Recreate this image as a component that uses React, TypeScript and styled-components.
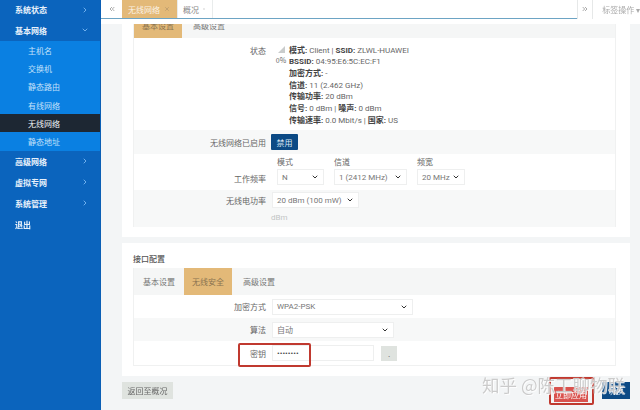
import styled, { createGlobalStyle } from "styled-components";
import { ChevronDown, ChevronRight, ChevronsLeft, ChevronsRight, X } from "lucide-react";

const menuBefore = ["系统状态"];
const subMenu = ["主机名", "交换机", "静态路由", "有线网络", "无线网络", "静态地址"];
const menuAfter = ["高级网络", "虚拟专网", "系统管理"];

const App = () => {
  return (
    <Page>
      <GlobalStyle />
      <Sidebar>
        {menuBefore.map((name) => (
          <MenuItem key={name}>
            {name}
            <ChevronRight size={8} strokeWidth={3} />
          </MenuItem>
        ))}
        <MenuItem>
          基本网络
          <ChevronDown size={8} strokeWidth={3} />
        </MenuItem>
        <SubList>
          {subMenu.map((name) => (
            <SubItem key={name} $active={name === "无线网络"}>
              {name}
            </SubItem>
          ))}
        </SubList>
        {menuAfter.map((name) => (
          <MenuItem key={name}>
            {name}
            <ChevronRight size={8} strokeWidth={3} />
          </MenuItem>
        ))}
        <MenuItem>退出</MenuItem>
      </Sidebar>

      <Main>
        <TabBar>
          <TabScroll>
            <ChevronsLeft size={8} strokeWidth={2.5} />
          </TabScroll>
          <Tab $active>
            无线网络
            <X size={6} strokeWidth={3} />
          </Tab>
          <Tab>
            概况
            <X size={6} strokeWidth={3} />
          </Tab>
          <TabTools>
            <TabForward>
              <ChevronsRight size={8} strokeWidth={2.5} />
            </TabForward>
            <TabAction>标签操作 ▾</TabAction>
          </TabTools>
        </TabBar>

        <Content>
          <Card>
            <ClippedTop>
              <Panel>
                <TabStrip $tall>
                  <PanelTab $active>基本设置</PanelTab>
                  <PanelTab>高级设置</PanelTab>
                </TabStrip>
                <StatusRow>
                  <Label>状态</Label>
                  <SignalBox>
                    <svg width="7" height="7" viewBox="0 0 7 7">
                      <path d="M0 7 L7 0 L7 7 Z" fill="#c9cccc" />
                    </svg>
                    <span>0%</span>
                  </SignalBox>
                  <StatusText>
                    <div>
                      <b>模式:</b> Client | <b>SSID:</b> ZLWL-HUAWEI
                    </div>
                    <div>
                      <b>BSSID:</b> 04:95:E6:5C:EC:F1
                    </div>
                    <div>
                      <b>加密方式:</b> -
                    </div>
                    <div>
                      <b>信道:</b> 11 (2.462 GHz)
                    </div>
                    <div>
                      <b>传输功率:</b> 20 dBm
                    </div>
                    <div>
                      <b>信号:</b> 0 dBm | <b>噪声:</b> 0 dBm
                    </div>
                    <div>
                      <b>传输速率:</b> 0.0 Mbit/s | <b>国家:</b> US
                    </div>
                  </StatusText>
                </StatusRow>
                <Row $grey $height={24}>
                  <Label>无线网络已启用</Label>
                  <DarkButton>禁用</DarkButton>
                </Row>
                <Row $height={36}>
                  <Label $low>工作频率</Label>
                  <FreqGroup>
                    <FreqField>
                      <FieldTitle>模式</FieldTitle>
                      <Select $width={47}>
                        N
                        <ChevronDown size={8} strokeWidth={3} />
                      </Select>
                    </FreqField>
                    <FreqField>
                      <FieldTitle>信道</FieldTitle>
                      <Select $width={73}>
                        1 (2412 MHz)
                        <ChevronDown size={8} strokeWidth={3} />
                      </Select>
                    </FreqField>
                    <FreqField>
                      <FieldTitle>频宽</FieldTitle>
                      <Select $width={48}>
                        20 MHz
                        <ChevronDown size={8} strokeWidth={3} />
                      </Select>
                    </FreqField>
                  </FreqGroup>
                </Row>
                <PowerRow>
                  <Label $top>无线电功率</Label>
                  <div>
                    <Select $width={87}>
                      20 dBm (100 mW)
                      <ChevronDown size={8} strokeWidth={3} />
                    </Select>
                    <Hint>dBm</Hint>
                  </div>
                </PowerRow>
              </Panel>
            </ClippedTop>
          </Card>

          <SecondCard>
            <SectionTitle>接口配置</SectionTitle>
            <Panel>
              <TabStrip>
                <PanelTab>基本设置</PanelTab>
                <PanelTab $active>无线安全</PanelTab>
                <PanelTab>高级设置</PanelTab>
              </TabStrip>
              <Row $height={23}>
                <Label>加密方式</Label>
                <Select $width={141}>
                  WPA2-PSK
                  <ChevronDown size={8} strokeWidth={3} />
                </Select>
              </Row>
              <Row $grey $height={23}>
                <Label>算法</Label>
                <Select $width={122}>
                  自动
                  <ChevronDown size={8} strokeWidth={3} />
                </Select>
              </Row>
              <KeyRow>
                <Label>密钥</Label>
                <KeyInput>••••••••</KeyInput>
                <RevealButton>.</RevealButton>
                <RedMark />
              </KeyRow>
            </Panel>
          </SecondCard>

          <Footer>
            <BackButton>返回至概况</BackButton>
            <FooterActions>
              <ApplyWrap>
                <ApplyButton>立即应用</ApplyButton>
                <RedOutline />
              </ApplyWrap>
              <SaveButton>切换</SaveButton>
            </FooterActions>
            <Watermark>知乎 @陈工聊物联</Watermark>
          </Footer>
        </Content>
      </Main>
    </Page>
  );
};

export default App;

const GlobalStyle = createGlobalStyle`
  html, body {
    margin: 0;
    padding: 0;
    background: #f3f5f6;
  }
  * {
    box-sizing: border-box;
  }
`;

const Page = styled.div`
  width: 640px;
  height: 410px;
  display: flex;
  overflow: hidden;
  font-family: "Noto Sans CJK SC", Roboto, "Liberation Sans", sans-serif;
  font-size: 8px;
  color: #666;
  filter: blur(0.35px);
`;

const Sidebar = styled.nav`
  width: 101px;
  flex: none;
  background: #0b64bd;
  border-right: 1px solid #0b5fb5;
`;

const MenuItem = styled.div`
  height: 21px;
  padding: 0 11px 0 15px;
  display: flex;
  align-items: center;
  justify-content: space-between;
  font-weight: 700;
  color: #e8f1fb;
  &:first-child {
    height: 19.5px;
  }
  svg {
    color: #6fb0ee;
  }
`;

const SubList = styled.div`
  height: 110px;
  padding-top: 0.5px;
  background: #0a80e2;
`;

const SubItem = styled.div<{ $active?: boolean }>`
  height: 18.3px;
  padding-left: 28px;
  display: flex;
  align-items: center;
  color: ${(p) => (p.$active ? "#f2f5f8" : "#c4e1fa")};
  background: ${(p) => (p.$active ? "#1d2733" : "transparent")};
`;

const Main = styled.main`
  flex: 1;
  min-width: 0;
  display: flex;
  flex-direction: column;
`;

const TabBar = styled.header`
  height: 19px;
  flex: none;
  display: flex;
  align-items: stretch;
  background: #fff;
  border-bottom: 1px solid #6da4c4;
`;

const TabScroll = styled.div`
  width: 21px;
  display: flex;
  align-items: center;
  justify-content: center;
  color: #999;
`;

const Tab = styled.div<{ $active?: boolean }>`
  padding: 0 7px 0 ${(p) => (p.$active ? "6px" : "5px")};
  width: ${(p) => (p.$active ? "56px" : "35px")};
  display: flex;
  align-items: center;
  gap: 4px;
  color: ${(p) => (p.$active ? "#fbf3e6" : "#888")};
  background: ${(p) => (p.$active ? "#e3b978" : "#fff")};
  border-right: 1px solid #e9ecec;
  white-space: nowrap;
  svg {
    color: ${(p) => (p.$active ? "#b89a6c" : "#888")};
  }
`;

const TabTools = styled.div`
  margin-left: auto;
  width: 63px;
  height: 21px;
  display: flex;
  background: #fff;
  border-left: 1px solid #e6e8e8;
  border-bottom: 1px solid #e8eaea;
`;

const TabForward = styled.div`
  width: 20px;
  display: flex;
  align-items: center;
  justify-content: center;
  padding-bottom: 2px;
  color: #999;
  border-right: 1px solid #e6e8e8;
`;

const TabAction = styled.div`
  padding: 0 0 2px 9px;
  display: flex;
  align-items: center;
  white-space: nowrap;
  color: #aaa;
`;

const Content = styled.div`
  flex: 1;
  min-height: 0;
  padding: 5px 10px 0 21px;
  background: linear-gradient(#fff 0, #fff 5px, #f3f5f6 5px);
  display: flex;
  flex-direction: column;
`;

const Card = styled.section`
  flex: none;
  height: 213px;
  padding: 0 14px 10px 11px;
  background: #fff;
  overflow: hidden;
`;

const ClippedTop = styled.div`
  height: 203px;
  overflow: hidden;
`;

const SecondCard = styled.section`
  flex: none;
  height: 133px;
  margin-top: 6px;
  padding: 9px 14px 0 11px;
  background: #fff;
`;

const SectionTitle = styled.div`
  height: 16px;
  font-weight: 500;
  color: #555;
  line-height: 14px;
`;

const Panel = styled.div`
  border: 1px solid #f0f1f1;
  border-top: 0;
`;

const TabStrip = styled.div<{ $tall?: boolean }>`
  height: 27px;
  display: flex;
  background: #f5f6f6;
  ${(p) => p.$tall && "height: 26px; margin-top: -12px;"}
`;

const PanelTab = styled.div<{ $active?: boolean }>`
  width: ${(p) => (p.$active ? "48px" : "50px")};
  display: flex;
  align-items: center;
  justify-content: center;
  color: ${(p) => (p.$active ? "#8a7350" : "#777")};
  background: ${(p) => (p.$active ? "#e3b978" : "transparent")};
  &:last-child {
    width: 54px;
  }
`;

const Row = styled.div<{ $grey?: boolean; $height: number }>`
  height: ${(p) => p.$height}px;
  display: flex;
  align-items: center;
  gap: 6px;
  background: ${(p) => (p.$grey ? "#f7f8f8" : "#fff")};
`;

const StatusRow = styled.div`
  height: 92px;
  display: flex;
  padding-top: 6.5px;
  background: #fff;
`;

const PowerRow = styled.div`
  height: 37px;
  padding-top: 2px;
  display: flex;
  gap: 6px;
  background: #f7f8f8;
`;

const KeyRow = styled.div`
  position: relative;
  height: 24px;
  display: flex;
  align-items: center;
  gap: 6px;
  background: #fff;
`;

const Label = styled.div<{ $low?: boolean; $top?: boolean }>`
  width: 132px;
  flex: none;
  text-align: right;
  color: #666;
  ${(p) => p.$low && "align-self: flex-end; padding-bottom: 6px;"}
  ${(p) => p.$top && "padding-top: 3px;"}
`;

const SignalBox = styled.div`
  width: 12px;
  margin: 0 2px 0 9px;
  flex: none;
  display: flex;
  flex-direction: column;
  align-items: center;
  gap: 3px;
  font-size: 7px;
  line-height: 9px;
  svg {
    margin-top: 1px;
  }
`;

const StatusText = styled.div`
  font-family: Roboto, "Noto Sans CJK SC", sans-serif;
  line-height: 11.7px;
  white-space: nowrap;
  color: #666;
  b {
    color: #444;
    font-weight: 700;
  }
`;

const DarkButton = styled.div`
  width: 27px;
  height: 16px;
  margin-left: -1px;
  display: flex;
  align-items: center;
  justify-content: center;
  background: #0c4a85;
  color: #dbe8f4;
  border-radius: 1px;
`;

const FreqGroup = styled.div`
  display: flex;
  gap: 10px;
  padding-left: 5px;
  align-self: flex-end;
  padding-bottom: 5px;
`;

const FreqField = styled.div`
  display: flex;
  flex-direction: column;
  gap: 1px;
`;

const FieldTitle = styled.div`
  height: 13px;
  line-height: 13px;
  color: #666;
`;

const Select = styled.div<{ $width: number }>`
  width: ${(p) => p.$width}px;
  height: 16px;
  padding: 0 4px 0 4px;
  display: flex;
  align-items: center;
  justify-content: space-between;
  font-family: Roboto, "Noto Sans CJK SC", sans-serif;
  white-space: nowrap;
  color: #777;
  background: #fff;
  border: 1px solid #eeefef;
  svg {
    color: #333;
    flex: none;
  }
`;

const Hint = styled.div`
  margin: 5px 0 0 -1px;
  font-family: Roboto, sans-serif;
  color: #c2c5c5;
`;

const KeyInput = styled.div`
  width: 102px;
  height: 16px;
  padding: 0 4px;
  display: flex;
  align-items: center;
  font-family: Roboto, sans-serif;
  font-size: 8px;
  color: #444;
  border: 1px solid #eeefef;
`;

const RevealButton = styled.div`
  width: 16px;
  height: 15px;
  margin-left: 1px;
  display: flex;
  align-items: center;
  justify-content: center;
  background: #dfe3df;
  color: #777;
`;

const RedMark = styled.div`
  position: absolute;
  left: 104px;
  top: 2px;
  width: 73px;
  height: 24px;
  border: 2px solid #c0392f;
  border-radius: 2px;
`;

const Footer = styled.div`
  position: relative;
  flex: 1;
  display: flex;
  align-items: flex-start;
  justify-content: space-between;
  padding-top: 6px;
`;

const BackButton = styled.div`
  width: 51px;
  height: 17px;
  display: flex;
  align-items: center;
  justify-content: center;
  background: #dfe3df;
  color: #666;
`;

const FooterActions = styled.div`
  display: flex;
  gap: 14px;
`;

const ApplyWrap = styled.div`
  position: relative;
  margin-top: 5px;
`;

const ApplyButton = styled.div`
  width: 34px;
  height: 15px;
  display: flex;
  align-items: center;
  justify-content: center;
  background: #d9534f;
  color: #fff;
  white-space: nowrap;
`;

const RedOutline = styled.div`
  position: absolute;
  left: -5px;
  top: -10px;
  width: 45px;
  height: 28px;
  border: 2px solid #c0392f;
  border-radius: 2px;
`;

const SaveButton = styled.div`
  width: 28px;
  height: 17px;
  display: flex;
  align-items: center;
  justify-content: center;
  background: #0c4a85;
  color: #e7eef6;
`;

const Watermark = styled.div`
  position: absolute;
  right: 5px;
  top: 0;
  font-size: 17.5px;
  line-height: 18px;
  white-space: nowrap;
  color: rgba(190, 190, 190, 0.8);
  text-shadow: 0 0 1px #fff, 1px 1px 0 rgba(255, 255, 255, 0.8);
`;
